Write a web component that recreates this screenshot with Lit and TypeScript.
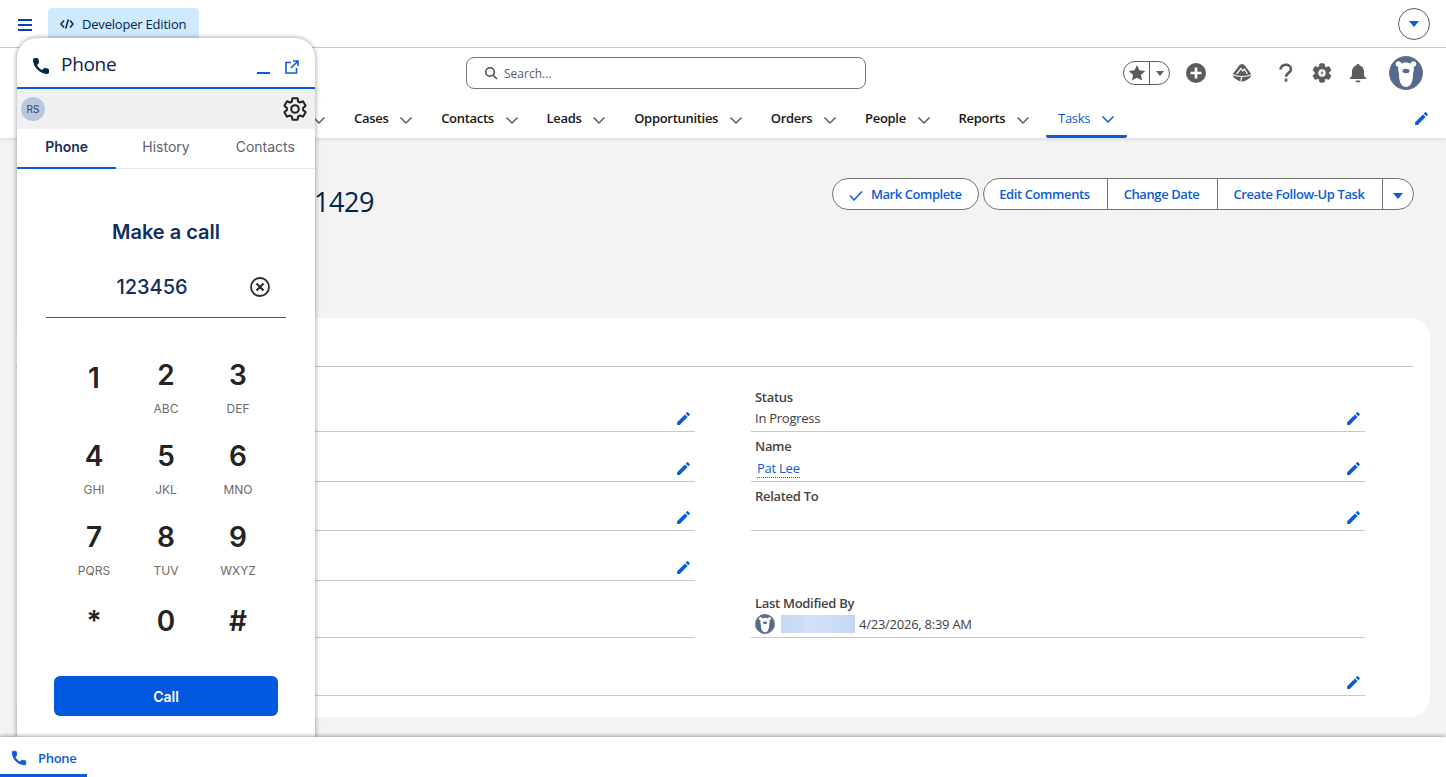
import { LitElement, html, css, svg } from 'lit';
import { customElement } from 'lit/decorators.js';

const PHONE = 'M6.62 10.79c1.44 2.83 3.76 5.14 6.59 6.59l2.2-2.2c.27-.27.67-.36 1.02-.24 1.12.37 2.33.57 3.57.57.55 0 1 .45 1 1V20c0 .55-.45 1-1 1-9.39 0-17-7.61-17-17 0-.55.45-1 1-1h3.5c.55 0 1 .45 1 1 0 1.25.2 2.45.57 3.57.11.35.03.74-.25 1.02l-2.2 2.2z';
const GEAR = 'M19.43 12.98c.04-.32.07-.64.07-.98s-.03-.66-.07-.98l2.11-1.65c.19-.15.24-.42.12-.64l-2-3.46c-.12-.22-.39-.3-.61-.22l-2.49 1c-.52-.4-1.08-.73-1.69-.98l-.38-2.65C14.46 2.18 14.25 2 14 2h-4c-.25 0-.46.18-.49.42l-.38 2.65c-.61.25-1.17.59-1.69.98l-2.49-1c-.23-.09-.49 0-.61.22l-2 3.46c-.13.22-.07.49.12.64l2.11 1.65c-.04.32-.07.65-.07.98s.03.66.07.98l-2.11 1.65c-.19.15-.24.42-.12.64l2 3.46c.12.22.39.3.61.22l2.49-1c.52.4 1.08.73 1.69.98l.38 2.65c.03.24.24.42.49.42h4c.25 0 .46-.18.49-.42l.38-2.65c.61-.25 1.17-.59 1.69-.98l2.49 1c.23.09.49 0 .61-.22l2-3.46c.12-.22.07-.49-.12-.64l-2.11-1.65z';
const PENCIL = 'M3 17.25V21h3.75L17.81 9.94l-3.75-3.75L3 17.25zM20.71 7.04c.39-.39.39-1.02 0-1.41l-2.34-2.34c-.39-.39-1.02-.39-1.41 0l-1.83 1.83 3.75 3.75 1.83-1.83z';

const icon = (d: string, size: number, color: string, thick = 0) => html`
  <svg width=${size} height=${size} viewBox="0 0 24 24" fill=${color} stroke=${color} stroke-width=${thick} stroke-linejoin="round" style="flex:none;display:block"><path d=${d}></path></svg>
`;

const chevron = (color: string) => html`
  <svg class="chev" width="14" height="14" viewBox="0 0 14 14" fill="none" stroke=${color} stroke-width="1.5"><path d="M1.5 4.5 7 10l5.5-5.5"></path></svg>
`;

const bear = (size: number) => html`
  <svg width=${size} height=${size} viewBox="0 0 34 34" style="flex:none;display:block">
    <circle cx="17" cy="17" r="16.500" fill="#56698f" stroke="#6f7580"></circle>
    ${svg`
      <circle cx="9.500" cy="8" r="2.800" fill="#fff"></circle>
      <circle cx="24.500" cy="8" r="2.800" fill="#fff"></circle>
      <path d="M9 13c0-4 3.500-6.500 8-6.500s8 2.500 8 6.500c0 1.500-1 3-1 6 0 7-2.500 12-7 12s-7-5-7-12c0-3-1-4.500-1-6z" fill="#fff"></path>
      <ellipse cx="17" cy="15" rx="3.500" ry="2.200" fill="#56698f"></ellipse>
    `}
  </svg>
`;

@customElement('phone-panel')
export class PhonePanel extends LitElement {
  static styles = css`
    :host {
      display: flex;
      flex-direction: column;
      position: absolute;
      left: 17px;
      top: 38px;
      width: 298px;
      height: 699px;
      background: white;
      border-radius: 20px 20px 0 0;
      box-shadow: 0 0 4px 1px rgba(0, 0, 0, 0.3);
      overflow: hidden;
      font-family: Inter, 'Liberation Sans', sans-serif;
    }

    .head {
      display: flex;
      align-items: center;
      height: 51px;
      flex: none;
      box-sizing: border-box;
      padding: 0 16px 0 14px;
      border-bottom: 2px solid #0b5cd8;
      font-family: 'Open Sans', sans-serif;
      font-size: 19px;
      color: #03234d;
    }

    .head .title {
      margin-left: 10px;
      margin-top: 2px;
      flex: 1;
      letter-spacing: -0.3px;
    }

    .head .phone-ic {
      margin-top: 6px;
    }

    .min {
      width: 13px;
      height: 2px;
      background: #0b5cd8;
      margin: 21px 15px 0 0;
    }

    .pop {
      margin-top: 9px;
    }

    .status {
      display: flex;
      align-items: center;
      justify-content: space-between;
      height: 40px;
      flex: none;
      box-sizing: border-box;
      padding: 0 7px 0 4px;
      background: #f0f0f0;
    }

    .initials {
      width: 24px;
      height: 24px;
      border-radius: 50%;
      background: #b9c7de;
      color: #2d3f5e;
      font-size: 10px;
      display: flex;
      align-items: center;
      justify-content: center;
    }

    .tabs {
      display: grid;
      grid-template-columns: repeat(3, 1fr);
      height: 40px;
      flex: none;
      box-sizing: border-box;
      border-bottom: 1px solid #e8e6e1;
    }

    .tab {
      display: flex;
      align-items: center;
      justify-content: center;
      font-size: 14px;
      color: #5f6368;
      height: 40px;
      box-sizing: border-box;
      padding-bottom: 6px;
    }

    .tab.active {
      font-weight: 600;
      border-bottom: 2px solid #0b5cd8;
      padding-bottom: 4px;
      color: #17305a;
    }

    .body {
      display: flex;
      flex-direction: column;
      align-items: stretch;
    }

    h2 {
      margin: 49px 0 0;
      font-size: 20px;
      line-height: 28px;
      font-weight: 600;
      text-align: center;
      color: #0f2f5f;
    }

    .dial {
      display: flex;
      align-items: flex-start;
      gap: 4px;
      margin: 21px 29px 0;
      padding: 0 16px 0 12px;
      height: 51px;
      box-sizing: border-box;
      border-bottom: 1px solid #1b5ac0;
    }

    .number {
      flex: 1;
      text-align: center;
      font-size: 20px;
      font-weight: 550;
      line-height: 40px;
      color: #17305a;
    }

    .dial svg {
      margin-top: 10px;
    }

    .keys {
      display: grid;
      grid-template-columns: repeat(3, 72px);
      grid-template-rows: 81px 81px 81px 75px;
      justify-content: center;
      margin-top: 40px;
    }

    .key {
      display: flex;
      flex-direction: column;
      align-items: center;
    }

    .digit {
      font-size: 28px;
      line-height: 34px;
      font-weight: 600;
      color: #242424;
    }

    .key.plain .digit {
      margin-top: 3px;
    }

    .letters {
      margin-top: 9px;
      font-size: 12px;
      line-height: 16px;
      color: #6b6b6b;
    }

    .call {
      margin: 0 37px;
      height: 40px;
      display: flex;
      align-items: center;
      justify-content: center;
      border-radius: 6px;
      background: #0358e0;
      color: white;
      font-size: 14px;
      font-weight: 600;
    }
  `;

  render() {
    const keys = [
      ['1', ''], ['2', 'ABC'], ['3', 'DEF'],
      ['4', 'GHI'], ['5', 'JKL'], ['6', 'MNO'],
      ['7', 'PQRS'], ['8', 'TUV'], ['9', 'WXYZ'],
      ['*', ''], ['0', ''], ['#', ''],
    ];

    return html`
      <div class="head">
        <span class="phone-ic">${icon(PHONE, 20, '#03234d', 1.2)}</span>
        <span class="title">Phone</span>
        <span class="min"></span>
        <svg class="pop" width="14" height="14" viewBox="0 0 14 14" fill="none" stroke="#0b5cd8" stroke-width="1.6">
          <path d="M6 2.500H1v10.500h10.500V8M8 1h5v5M13 1 6 8"></path>
        </svg>
      </div>
      <div class="status">
        <div class="initials">RS</div>
        <svg width="26" height="26" viewBox="0 0 24 24" fill="none" stroke="#242424" stroke-width="1.900" stroke-linejoin="round">
          <path d=${GEAR}></path><circle cx="12" cy="12" r="3.500"></circle>
        </svg>
      </div>
      <div class="tabs">
        <div class="tab active">Phone</div>
        <div class="tab">History</div>
        <div class="tab">Contacts</div>
      </div>
      <div class="body">
        <h2>Make a call</h2>
        <div class="dial">
          <span class="number">123456</span>
          <svg width="20" height="20" viewBox="0 0 20 20" fill="none" stroke="#2b2b2b" stroke-width="1.800">
            <circle cx="10" cy="10" r="9"></circle><path stroke-width="2.200" d="M6.500 6.500l7 7M13.500 6.500l-7 7"></path>
          </svg>
        </div>
        <div class="keys">
          ${keys.map(([d, l]) => html`
            <div class="key ${l ? '' : 'plain'}">
              <span class="digit">${d}</span>
              ${l ? html`<span class="letters">${l}</span>` : ''}
            </div>
          `)}
        </div>
        <div class="call">Call</div>
      </div>
    `;
  }
}

@customElement('app-root')
export class AppRoot extends LitElement {
  static styles = css`
    :host {
      display: flex;
      flex-direction: column;
      position: relative;
      height: 777px;
      overflow: hidden;
      background: #f3f3f3;
      font-family: 'Open Sans', sans-serif;
      font-size: 13px;
      color: #2e2e2e;
    }

    .top {
      display: flex;
      align-items: flex-start;
      justify-content: space-between;
      height: 48px;
      flex: none;
      box-sizing: border-box;
      padding: 8px 16px 0 18px;
      background: white;
      border-bottom: 1px solid #c9c9c9;
    }

    .top-left {
      display: flex;
      align-items: flex-start;
      gap: 16px;
    }

    .burger {
      display: flex;
      flex-direction: column;
      gap: 3px;
      width: 14px;
      margin-top: 11px;
    }

    .burger i {
      height: 2px;
      background: #0b3fc0;
    }

    .badge {
      display: flex;
      align-items: center;
      gap: 8px;
      height: 32px;
      padding: 0 13px 0 12px;
      background: #cfe9fe;
      border-radius: 4px 4px 0 0;
      color: #03234d;
      font-weight: 500;
      letter-spacing: -0.2px;
    }

    .round {
      width: 32px;
      height: 32px;
      box-sizing: border-box;
      border: 1px solid #5c5c5c;
      border-radius: 50%;
      background: white;
      display: flex;
      align-items: center;
      justify-content: center;
    }

    .tri {
      width: 0;
      height: 0;
      border-left: 5.500px solid transparent;
      border-right: 5.500px solid transparent;
      border-top: 6px solid #0b5cd8;
    }

    .header {
      display: flex;
      align-items: center;
      height: 49px;
      flex: none;
      box-sizing: border-box;
      padding: 1px 0 0 466px;
      background: white;
    }

    .search {
      display: flex;
      align-items: center;
      gap: 6px;
      width: 400px;
      height: 32px;
      box-sizing: border-box;
      padding-left: 17px;
      border: 1px solid #747474;
      border-radius: 8px;
      color: #5c5c5c;
      font-size: 12px;
    }

    .tools {
      display: flex;
      align-items: center;
      margin-left: 257px;
    }

    .star-group {
      display: flex;
      width: 47px;
      height: 24px;
      box-sizing: border-box;
      border: 1px solid #5c5c5c;
      border-radius: 12px;
      margin-right: 16px;
    }

    .star-group span {
      display: flex;
      align-items: center;
      justify-content: center;
    }

    .star-group span:first-child {
      width: 25px;
      border-right: 1px solid #5c5c5c;
    }

    .star-group span:last-child {
      flex: 1;
    }

    .tri-small {
      width: 0;
      height: 0;
      border-left: 4.500px solid transparent;
      border-right: 4.500px solid transparent;
      border-top: 5px solid #5c5c5c;
    }

    .plus {
      margin-right: 26px;
    }

    .trail {
      margin-right: 24px;
    }

    .help {
      margin-right: 15px;
    }

    .gear {
      margin-right: 15px;
    }

    .bell {
      margin-right: 21px;
    }

    .nav {
      display: flex;
      align-items: stretch;
      height: 41px;
      flex: none;
      box-sizing: border-box;
      padding: 1px 16px 0 0;
      background: white;
      box-shadow: 0 2px 3px rgba(0, 0, 0, 0.08);
      position: relative;
      font-weight: 600;
      color: #181818;
      letter-spacing: -0.3px;
    }

    .nav-lead {
      display: flex;
      align-items: center;
      justify-content: flex-end;
      width: 342px;
      padding-right: 16px;
      box-sizing: border-box;
    }

    .nav-item {
      display: flex;
      align-items: center;
      gap: 11px;
      padding: 0 15.700px 0 12px;
      box-sizing: border-box;
    }

    .nav-item.active {
      color: #0b5cd8;
      font-weight: 500;
      padding: 2px 12px 0;
      border-bottom: 3px solid #0b5cd8;
      border-radius: 0 0 2px 2px;
    }

    .nav-edit {
      margin-left: auto;
      align-self: center;
    }

    .chev {
      flex: none;
      margin-top: 3px;
    }

    main {
      flex: 1;
      display: flex;
      flex-direction: column;
      min-height: 0;
    }

    .title-row {
      display: flex;
      justify-content: space-between;
      align-items: flex-start;
      height: 180px;
      flex: none;
      box-sizing: border-box;
      padding: 40px 32px 0 314px;
    }

    .record {
      font-size: 27px;
      line-height: 38px;
      margin-top: 5px;
      color: #03234d;
      letter-spacing: -0.4px;
    }

    .actions {
      display: flex;
      gap: 4px;
      color: #0b5cd8;
      font-weight: 600;
      letter-spacing: -0.4px;
    }

    .btn {
      display: flex;
      align-items: center;
      gap: 8px;
      width: 147px;
      height: 32px;
      box-sizing: border-box;
      padding-left: 16px;
      background: white;
      border: 1px solid #747474;
      border-radius: 16px;
      letter-spacing: -0.45px;
    }

    .btn svg {
      margin-top: 3px;
    }

    .group {
      display: flex;
      height: 32px;
      box-sizing: border-box;
      background: white;
      border: 1px solid #747474;
      border-radius: 16px;
      overflow: hidden;
    }

    .group span {
      display: flex;
      align-items: center;
      justify-content: center;
      padding-right: 2px;
      border-right: 1px solid #747474;
      box-sizing: border-box;
    }

    .group span:last-child {
      padding-right: 0;
      border-right: none;
    }

    .w1 { width: 124px; }
    .w2 { width: 110px; }
    .w3 { width: 165px; }
    .w4 { width: 30px; padding-top: 3px; }

    .card {
      margin: 0 16px;
      padding-bottom: 21px;
      background: white;
      border-radius: 20px;
    }

    .card-head {
      height: 49px;
      box-sizing: border-box;
      margin-right: 17px;
      border-bottom: 1px solid #c9c9c9;
    }

    .grid {
      display: grid;
      grid-template-columns: 614px 614px;
      grid-template-rows: 50px 50px 49px 50px 57px 58px;
      column-gap: 56px;
      margin: 15px 0 0 65px;
    }

    .field {
      display: flex;
      flex-direction: column;
      justify-content: flex-end;
      gap: 2px;
      position: relative;
      box-sizing: border-box;
      padding: 0 4px 3px;
      border-bottom: 1px solid #c9c9c9;
    }

    .field.empty {
      border-bottom: none;
    }

    .field.wide {
      grid-column: 1 / span 2;
    }

    .label {
      line-height: 18px;
      font-weight: 600;
      color: #444;
      letter-spacing: -0.3px;
    }

    .value {
      display: flex;
      align-items: center;
      line-height: 20px;
      min-height: 20px;
      letter-spacing: -0.25px;
      color: #3e3e3e;
    }

    .value a {
      color: #0b5cd8;
      margin: 2px 0 0 2px;
      line-height: 18px;
      border-bottom: 1px dotted #0b5cd8;
    }

    .edit {
      position: absolute;
      right: 3px;
      bottom: 4px;
    }

    .blur {
      width: 74px;
      height: 18px;
      margin: 0 4px 0 6px;
      background: linear-gradient(90deg, #c6d7f5, #d3e0f7 45%, #c6d7f5);
    }

    footer {
      display: flex;
      height: 40px;
      flex: none;
      background: white;
      position: relative;
      z-index: 2;
      box-shadow: 0 -1px 4px rgba(0, 0, 0, 0.35);
    }

    .dock {
      display: flex;
      align-items: center;
      gap: 10px;
      width: 87px;
      box-sizing: border-box;
      padding: 5px 0 0 10px;
      border-bottom: 3px solid #0b5cd8;
      color: #0b5cd8;
      font-weight: 600;
      letter-spacing: -0.3px;
    }
  `;

  field(label: string, value: unknown = '', editable = true, cls = '') {
    return html`
      <div class="field ${cls}">
        ${label ? html`<span class="label">${label}</span>` : ''}
        <div class="value">${value}</div>
        ${editable ? html`<span class="edit">${icon(PENCIL, 17, '#0b5cd8')}</span>` : ''}
      </div>
    `;
  }

  render() {
    const navs = ['Cases', 'Contacts', 'Leads', 'Opportunities', 'Orders', 'People', 'Reports'];

    return html`
      <div class="top">
        <div class="top-left">
          <div class="burger"><i></i><i></i><i></i></div>
          <div class="badge">
            <svg width="14" height="14" viewBox="0 0 14 14" fill="none" stroke="#03234d" stroke-width="1.500">
              <path d="M4 3.500 1 7l3 3.500M10 3.500 13 7l-3 3.500M8.300 2.500 5.700 11.500"></path>
            </svg>
            Developer Edition
          </div>
        </div>
        <div class="round"><span class="tri"></span></div>
      </div>

      <div class="header">
        <div class="search">
          <svg width="14" height="14" viewBox="0 0 14 14" fill="none" stroke="#444" stroke-width="1.500">
            <circle cx="6" cy="6" r="4.300"></circle><path d="m9.200 9.200 3.800 3.800"></path>
          </svg>
          Search...
        </div>
        <div class="tools">
          <div class="star-group">
            <span>
              <svg width="20" height="20" viewBox="0 0 24 24" fill="#5c5c5c"><path d="m12 2.500 2.900 6.300 6.900.8-5.100 4.700 1.400 6.800-6.100-3.400-6.100 3.400 1.400-6.800-5.100-4.700 6.900-.8z"></path></svg>
            </span>
            <span><i class="tri-small"></i></span>
          </div>
          <svg class="plus" width="20" height="20" viewBox="0 0 20 20">
            <circle cx="10" cy="10" r="10" fill="#5c5c5c"></circle><path d="M10 4.500v11M4.500 10h11" stroke="#fff" stroke-width="2.600"></path>
          </svg>
          <svg class="trail" width="20" height="20" viewBox="0 0 20 20">
            <path d="M10 1c1.300 0 2.200.8 3 1.800l5.500 7.200c1 1.500 1 3.200-.2 4.200C15.700 16.800 13 18.500 10 18.500s-5.700-1.700-8.300-4.300c-1.200-1-1.200-2.700-.2-4.200L7 2.800C7.800 1.800 8.700 1 10 1z" fill="#5c5c5c"></path>
            <path d="M4.500 11 9 5.500l1.800 2.500L12.500 6l3 5M.800 11.800c3 1.300 6 1.700 9 1.700l-1 4.500M10.500 13.500c3 0 6-.4 8.800-1.700" fill="none" stroke="#fff" stroke-width="1.200"></path>
          </svg>
          <svg class="help" width="20" height="20" viewBox="0 0 20 20" fill="none" stroke="#5c5c5c" stroke-width="2.600">
            <path d="M4.500 6.500C4.500 3.500 7.500 1.800 10 1.800s5 1.500 5 4.500c0 3.700-5 3.400-5 7.400"></path><path d="M10 15.500v3.200"></path>
          </svg>
          <svg class="gear" width="22" height="22" viewBox="0 0 24 24">
            <path d=${GEAR} fill="#5c5c5c" stroke="#5c5c5c"></path><circle cx="12" cy="12" r="4" fill="#fff"></circle><path d="m12.800 8.800-2.600 3.700h2l-1 2.700 2.700-3.800h-2z" fill="#5c5c5c"></path>
          </svg>
          <svg class="bell" width="20" height="20" viewBox="0 0 20 20" fill="#5c5c5c">
            <path d="M10 1c1 0 1.500.6 1.600 1.400C14.600 3 16 5.500 16 8.500v3c0 1.500.8 2.500 2 3.300.7.500.4 1.200-.4 1.200H2.400c-.8 0-1.100-.7-.4-1.200 1.200-.8 2-1.800 2-3.300v-3C4 5.500 5.400 3 8.400 2.400 8.500 1.600 9 1 10 1zM7.500 17.500h5C12.300 18.800 11.300 19.500 10 19.500s-2.300-.7-2.500-2z"></path>
          </svg>
          ${bear(34)}
        </div>
      </div>

      <nav class="nav">
        <div class="nav-lead">${chevron('#5c5c5c')}</div>
        ${navs.map((n) => html`<div class="nav-item">${n}${chevron('#5c5c5c')}</div>`)}
        <div class="nav-item active">Tasks${chevron('#0b5cd8')}</div>
        <span class="nav-edit">${icon(PENCIL, 17, '#0b5cd8')}</span>
      </nav>

      <main>
        <div class="title-row">
          <div class="record">1429</div>
          <div class="actions">
            <div class="btn">
              <svg width="14" height="10" viewBox="0 0 14 10" fill="none" stroke="#0b5cd8" stroke-width="1.500"><path d="m1 4.500 4 4.500 8-8.500"></path></svg>
              Mark Complete
            </div>
            <div class="group">
              <span class="w1">Edit Comments</span>
              <span class="w2">Change Date</span>
              <span class="w3">Create Follow-Up Task</span>
              <span class="w4"><i class="tri"></i></span>
            </div>
          </div>
        </div>
        <div class="card">
          <div class="card-head"></div>
          <div class="grid">
            ${this.field('')}
            ${this.field('Status', 'In Progress')}
            ${this.field('')}
            ${this.field('Name', html`<a>Pat Lee</a>`)}
            ${this.field('')}
            ${this.field('Related To')}
            ${this.field('')}
            ${this.field('', '', false, 'empty')}
            ${this.field('', '', false)}
            ${this.field('Last Modified By', html`${bear(20)}<span class="blur"></span>4/23/2026, 8:39 AM`, false)}
            ${this.field('', '', true, 'wide')}
          </div>
        </div>
      </main>

      <footer>
        <div class="dock">${icon(PHONE, 18, '#0b5cd8', 1.2)}Phone</div>
      </footer>

      <phone-panel></phone-panel>
    `;
  }
}
